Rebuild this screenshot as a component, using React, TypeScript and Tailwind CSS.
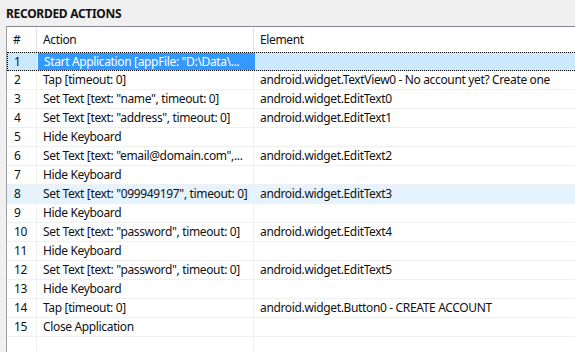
const rows: { action: string; element: string }[] = [
  { action: 'Start Application [appFile: "D:\\Data\\...', element: "" },
  { action: "Tap [timeout: 0]", element: "android.widget.TextView0 - No account yet? Create one" },
  { action: 'Set Text [text: "name", timeout: 0]', element: "android.widget.EditText0" },
  { action: 'Set Text [text: "address", timeout: 0]', element: "android.widget.EditText1" },
  { action: "Hide Keyboard", element: "" },
  { action: 'Set Text [text: "email@domain.com",...', element: "android.widget.EditText2" },
  { action: "Hide Keyboard", element: "" },
  { action: 'Set Text [text: "099949197", timeout: 0]', element: "android.widget.EditText3" },
  { action: "Hide Keyboard", element: "" },
  { action: 'Set Text [text: "password", timeout: 0]', element: "android.widget.EditText4" },
  { action: "Hide Keyboard", element: "" },
  { action: 'Set Text [text: "password", timeout: 0]', element: "android.widget.EditText5" },
  { action: "Hide Keyboard", element: "" },
  { action: "Tap [timeout: 0]", element: "android.widget.Button0 - CREATE ACCOUNT" },
  { action: "Close Application", element: "" },
];

const App = () => {
  return (
    <div className="w-[575px] h-[352px] overflow-hidden bg-[#f0f0f0] font-['Noto_Sans',sans-serif] text-[12px] tracking-[-0.35px] text-[#111] flex flex-col">
      {/* Title */}
      <div className="shrink-0 h-[26px] pl-[6px] pt-[5px] font-bold text-[12px] leading-[18px] tracking-[-0.3px]">RECORDED ACTIONS</div>

      {/* Table */}
      <div className="flex-1 min-h-0 overflow-hidden ml-[6px] bg-white border-l border-t border-l-[#a0a0a0] border-t-[#848890]">
        {/* Header */}
        <div className="grid grid-cols-[30px_217px_1fr] h-[25px] items-center">
          <div className="pl-[6px] border-r border-[#e5e5e5] h-full flex items-center">#</div>
          <div className="pl-[6px] border-r border-[#e5e5e5] h-full flex items-center">Action</div>
          <div className="pl-[6px] h-full flex items-center">Element</div>
        </div>

        {rows.map((row, i) => {
          const selected = i === 0;
          const hover = i === 7;
          return (
            <div
              key={i}
              className={`grid grid-cols-[30px_217px_1fr] h-[19px] ${
                selected
                  ? "bg-[#cce8ff] border-y border-l border-dotted border-black"
                  : hover
                  ? "bg-[#e5f3ff] border-b border-[#f0f0f0]"
                  : "border-b border-[#f0f0f0]"
              }`}
            >
              <div className={`${selected ? "pl-[6px]" : "pl-[7px]"} border-r border-[#f0f0f0] flex items-center leading-none`}>
                {i + 1}
              </div>
              <div
                className={`pl-[6px] flex items-center whitespace-nowrap overflow-hidden leading-none ${
                  selected ? "bg-[#3399ff] text-white" : "border-r border-[#f0f0f0]"
                }`}
              >
                {row.action}
              </div>
              <div className="pl-[6px] flex items-center whitespace-nowrap overflow-hidden leading-none">{row.element}</div>
            </div>
          );
        })}

        <div className="grid grid-cols-[30px_217px_1fr] h-[19px]">
          <div className="border-r border-[#f0f0f0]"></div>
          <div className="border-r border-[#f0f0f0]"></div>
          <div></div>
        </div>
      </div>
    </div>
  );
};

export default App;
